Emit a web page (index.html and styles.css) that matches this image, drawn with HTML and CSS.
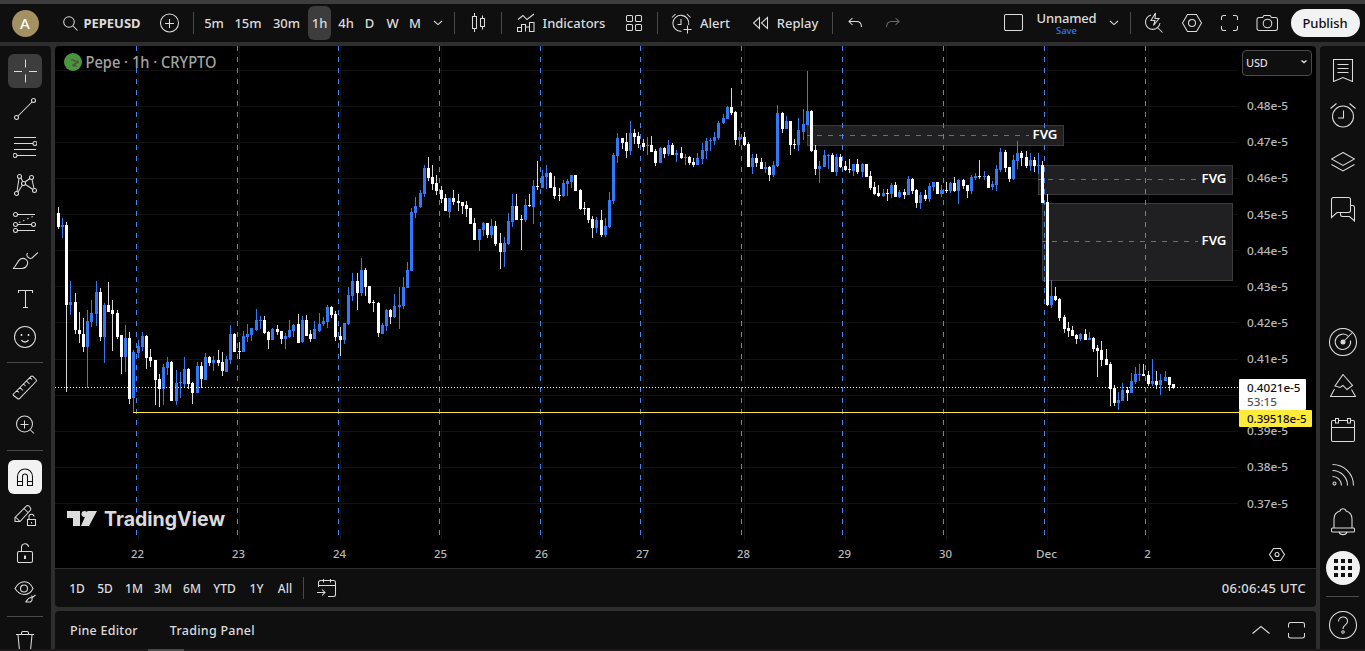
FILE: index.html
```html
<!DOCTYPE html>
<html lang="en">
<head>
    <meta charset="UTF-8">
    <meta name="viewport" content="width=device-width, initial-scale=1.0">
    <title>PEPEUSD - Chart</title>
    <link rel="stylesheet" href="styles.css">
</head>
<body>
    <div class="app">
        <header class="header">
            <div class="slot"><span class="avatar">A</span></div>
            <div class="slot symbol">
                <svg class="icon" width="15" height="15" viewBox="0 0 15 15"><circle cx="6" cy="6" r="5.3"/><path d="M10 10l4.5 4.5"/></svg>
                <b>PEPEUSD</b>
            </div>
            <div class="slot"><svg class="icon" width="20" height="20" viewBox="0 0 20 20"><circle cx="9.500" cy="10" r="9"/><path d="M5 10.500h9M9.500 6v9"/></svg></div>
            <div class="slot"><i class="sep"></i></div>
            <div class="slot">5m</div>
            <div class="slot">15m</div>
            <div class="slot">30m</div>
            <div class="slot"><span class="active-time">1h</span></div>
            <div class="slot">4h</div>
            <div class="slot">D</div>
            <div class="slot">W</div>
            <div class="slot">M</div>
            <div class="slot"><svg class="icon" width="10" height="6" viewBox="0 0 10 6"><path d="M1 1l4 3.6L9 1"/></svg></div>
            <div class="slot"><i class="sep"></i></div>
            <div class="slot"><svg class="icon" width="16" height="22" viewBox="0 0 16 22"><path d="M2.500 4.500h4v12h-4zM4.500 1v3.500M4.500 16.500V20M10.500 6.500h4v8h-4zM12.500 3.500v3M12.500 14.500v3"/></svg></div>
            <div class="slot"><i class="sep"></i></div>
            <div class="slot gap">
                <svg class="icon" width="18" height="20" viewBox="0 0 18 20"><path d="M.5 18.500v-4h4v4zM4.500 18.500v-7h4v7M8.500 18.500v-4.500h4v4.500M12.500 18.500v-9h4.500v9zM1 6.500l5-4 4 4 7-5.500"/></svg>
                <span>Indicators</span>
            </div>
            <div class="slot"><svg class="icon" width="18" height="18" viewBox="0 0 18 18"><rect x="1.500" y="1.500" width="6" height="6" rx="1"/><rect x="10.500" y="1.500" width="6" height="6" rx="1"/><rect x="1.500" y="10.500" width="6" height="6" rx="1"/><rect x="10.500" y="10.500" width="6" height="6" rx="1"/></svg></div>
            <div class="slot"><i class="sep"></i></div>
            <div class="slot gap">
                <svg class="icon" width="21" height="21" viewBox="0 0 21 21"><path d="M10.500 18.300A8 8 0 1 1 17.700 12M1 4.500L4.500 1M19.500 4.500L16 1M10 6v5.500H6.500M16.500 12.500v8M12.500 16.500h8"/></svg>
                <span>Alert</span>
            </div>
            <div class="slot"></div>
            <div class="slot gap">
                <svg class="icon" width="16" height="14" viewBox="0 0 16 14"><path d="M6.500 1.500v11L.5 7zM14.500 1.500v11L8.500 7z"/></svg>
                <span>Replay</span>
            </div>
            <div class="slot"><i class="sep"></i></div>
            <div class="slot"><svg class="icon" width="14" height="12" viewBox="0 0 14 12"><path d="M4.500 1L1 4.500 4.500 8M1 4.500h7.500c3 0 5 2 5 5.500"/></svg></div>
            <div class="slot"><svg class="icon dim" width="14" height="12" viewBox="0 0 14 12"><path d="M9.500 1L13 4.500 9.500 8M13 4.500H5.500c-3 0-5 2-5 5.500"/></svg></div>
            <div class="slot"></div>
            <div class="slot"><svg class="icon" width="20" height="18" viewBox="0 0 20 18"><rect x=".5" y=".5" width="18" height="16" rx="1.500"/></svg></div>
            <div class="slot layout-name"><span>Unnamed</span><small>Save</small></div>
            <div class="slot"><svg class="icon" width="10" height="6" viewBox="0 0 10 6"><path d="M1 1l4 3.600L9 1"/></svg></div>
            <div class="slot"><i class="sep"></i></div>
            <div class="slot"><svg class="icon" width="20" height="22" viewBox="0 0 20 22"><path d="M7 3a7.300 7.300 0 1 0 9 8M13 15l5.500 5.500M11.500 1L7 8.500h4L9.500 13.500 15 6.500h-4z"/></svg></div>
            <div class="slot"><svg class="icon" width="22" height="20" viewBox="0 0 22 20"><path d="M6.500 1.500h9L20.500 10l-5 8.500h-9L1.500 10z"/><circle cx="11" cy="10" r="3.500"/></svg></div>
            <div class="slot"><svg class="icon" width="17" height="18" viewBox="0 0 17 18"><path d="M5 1.500H2.500a2 2 0 0 0-2 2V6M12 1.500h2.500a2 2 0 0 1 2 2V6M5 16.500H2.500a2 2 0 0 1-2-2V12M12 16.500h2.500a2 2 0 0 0 2-2V12"/></svg></div>
            <div class="slot"><svg class="icon" width="22" height="18" viewBox="0 0 22 18"><path d="M3 3.500h3.500l1.500-2h6l1.500 2H19.500a2 2 0 0 1 2 2v9a2 2 0 0 1-2 2H3a2 2 0 0 1-2-2v-9a2 2 0 0 1 2-2z"/><circle cx="11.500" cy="9.500" r="4.300"/></svg></div>
            <div class="slot"><button class="publish">Publish</button></div>
        </header>

        <nav class="tools">
            <div class="slot"><span class="tool-btn"><svg class="icon" width="24" height="24" viewBox="0 0 24 24"><path d="M12.500 0.500v8M12.500 15.500v8M1 12.500h8M16 12.500h8"/></svg></span></div>
            <div class="slot"><svg class="icon" width="24" height="24" viewBox="0 0 24 24"><circle cx="3.500" cy="20.500" r="2"/><circle cx="20.500" cy="3.500" r="2"/><path d="M5 19L19 5"/></svg></div>
            <div class="slot"><svg class="icon" width="24" height="24" viewBox="0 0 24 24"><path d="M1 2.500h22M1 8.500h19M1 14.500h22M4 20.500h19"/><circle cx="22" cy="8.500" r="2"/><circle cx="2" cy="20.500" r="2"/></svg></div>
            <div class="slot"><svg class="icon" width="24" height="24" viewBox="0 0 24 24"><circle cx="6.500" cy="3.500" r="2"/><circle cx="18.500" cy="4.500" r="2"/><circle cx="3.500" cy="20.500" r="2"/><circle cx="21.500" cy="17.500" r="2"/><circle cx="10.500" cy="10.500" r="2"/><path d="M6 5.500L4 18.500M8 5l2 4M9.500 12L5 19M12 9l5-3.500M19 6.500l2 9M12.500 11.500l7.500 5"/></svg></div>
            <div class="slot"><svg class="icon" width="24" height="24" viewBox="0 0 24 24"><circle cx="2.500" cy="3.500" r="2"/><circle cx="2.500" cy="13.500" r="2"/><circle cx="20.500" cy="13.500" r="2"/><circle cx="2.500" cy="19.500" r="2"/><path d="M4.500 3.500H22M4.500 13.500h14M4.500 19.500H22"/><path d="M6 11.500L21 5" stroke-dasharray="1.500 3"/></svg></div>
            <div class="slot"><svg class="icon" width="26" height="18" viewBox="0 0 26 18"><path d="M1 16.500c3-1 4-7.500 7.500-9.500 4-2 8 1.500 7 5-.8 3-3 4.500-6 4.500zM15.500 1c-2 3 1.500 6.500 4.500 5L26 .5"/></svg></div>
            <div class="slot"><svg class="icon" width="18" height="20" viewBox="0 0 18 20"><path d="M2.500 4V1.500h14V4M9.500 1.500v17M7 18.500h5"/></svg></div>
            <div class="slot"><svg class="icon" width="24" height="24" viewBox="0 0 24 24"><circle cx="12" cy="12" r="10.500"/><path d="M8.500 15c1.500 2.700 5.500 2.700 7 0M8.500 9v2M15.500 9v2" stroke-width="1.500"/></svg></div>
            <div class="slot"><i class="line"></i></div>
            <div class="slot"><svg class="icon" width="26" height="26" viewBox="0 0 26 26"><path d="M1.500 19L19 1.500a1.500 1.500 0 0 1 2 0L24 4.500a1.500 1.500 0 0 1 0 2L7.500 23.500a1.500 1.500 0 0 1-2 0l-4-3a1 1 0 0 1 0-1.500zM5 15.500l2 2M8 12.500l3 3M11.500 9l2 2M14.500 6l3 3M18 2.500l2 2"/></svg></div>
            <div class="slot"><svg class="icon" width="20" height="20" viewBox="0 0 20 20"><circle cx="9.500" cy="9" r="8"/><path d="M5.500 9.500h8M9.500 5.500v8M15.500 15l3.500 3.500"/></svg></div>
            <div class="slot"><i class="line"></i></div>
            <div class="slot"><span class="tool-btn light"><svg class="icon" width="18" height="20" viewBox="0 0 18 20"><path d="M1.500 18.500v-9a7.500 7.500 0 0 1 15 0v9h-5v-9a2.500 2.500 0 0 0-5 0v9zM1.500 14.500h5M11.500 14.500h5"/></svg></span></div>
            <div class="slot"><svg class="icon" width="24" height="24" viewBox="0 0 24 24"><path d="M2 17.500v-4L13.500 2a2 2 0 0 1 2.500 0L17.500 4a2 2 0 0 1 0 2L7 17.500zM11 4.500l4 4M2.500 13l4.500 4.500M14.500 15.500h8v6h-8zM16 15.500V13a2.500 2.500 0 0 1 5-.5M18.500 18v1.500"/></svg></div>
            <div class="slot"><svg class="icon" width="18" height="22" viewBox="0 0 18 22"><rect x="1.500" y="8.500" width="15" height="11" rx="1.500"/><path d="M5.500 8.500V4.500a3.500 3.500 0 0 1 7-.5"/><path d="M9 12.500v3.500" stroke-width="2"/></svg></div>
            <div class="slot"><svg class="icon" width="24" height="24" viewBox="0 0 24 24"><path d="M2 8.500c5-9 14-9 18 0-4 8-13 8-18 0z"/><circle cx="11" cy="8.500" r="3.500"/><path d="M12.500 22c2-1 1.500-4 5-4.500 2 0 2.500 2.500 0 4.500zM18.500 15.500l1 2 3-2.500"/></svg></div>
            <div class="slot"><i class="line"></i></div>
            <div class="slot"><svg class="icon" width="20" height="24" viewBox="0 0 20 24"><path d="M1 5.500h18M6.500 5V4a1.500 1.500 0 0 1 1.500-1.500h4A1.500 1.500 0 0 1 13.500 4V5M3 6l1.500 15.500h11L17 6"/></svg></div>
        </nav>

        <main class="center">
            <section class="chart">
                <svg id="chart" width="1261" height="522" viewBox="55 46 1261 522"></svg>
                <button class="currency">USD <svg class="icon" width="6" height="4" viewBox="0 0 6 4"><path d="M.5.5L3 2.500 5.500.5" stroke-width="1.400"/></svg></button>
            </section>
            <div class="ranges">
                <div class="slot">1D</div>
                <div class="slot">5D</div>
                <div class="slot">1M</div>
                <div class="slot">3M</div>
                <div class="slot">6M</div>
                <div class="slot">YTD</div>
                <div class="slot">1Y</div>
                <div class="slot">All</div>
                <div class="slot"><i class="sep"></i></div>
                <div class="slot"><svg class="icon" width="20" height="20" viewBox="0 0 20 20"><path d="M1.500 9V4.500a2 2 0 0 1 2-2h13a2 2 0 0 1 2 2v12a2 2 0 0 1-2 2H11M1.500 7.500h17M6.500 1v3.500M13.500 1v3.500M0 14.500h8M5 11.500l3 3-3 3"/></svg></div>
                <div class="clock">06:06:45 UTC</div>
            </div>
            <footer class="bottom">
                <span class="pine">Pine Editor</span>
                <span class="panel">Trading Panel</span>
                <span class="bottom-icons">
                    <svg class="icon" width="18" height="10" viewBox="0 0 18 10"><path d="M.5 8.500L9 1.500l8.500 7"/></svg>
                    <svg class="icon" width="17" height="17" viewBox="0 0 17 17"><path d="M.5 5.500v-3a2 2 0 0 1 2-2h12a2 2 0 0 1 2 2v3M.5 11v3a2 2 0 0 0 2 2h12a2 2 0 0 0 2-2v-3"/></svg>
                </span>
            </footer>
        </main>

        <aside class="side">
            <div class="slot"><svg class="icon" width="22" height="24" viewBox="0 0 22 24"><path d="M1.500 1.500h19v22L11 19.500 1.500 23.500zM5.500 6.500h11M5.500 10.500h11M5.500 14.500h11"/></svg></div>
            <div class="slot"><svg class="icon" width="26" height="26" viewBox="0 0 26 26"><circle cx="13" cy="13.500" r="10.500"/><path d="M13.500 7.500V15H8M.5 5.500L6.500.5M25.500 5.500L19.500.5"/></svg></div>
            <div class="slot"><svg class="icon" width="24" height="20" viewBox="0 0 24 20"><path d="M12 .5L23.500 7 12 13.500.5 7zM.5 12.500L12 19l11.500-6.500"/></svg></div>
            <div class="slot"><svg class="icon" width="26" height="26" viewBox="0 0 26 26"><path d="M3.500 1.500h15a2 2 0 0 1 2 2v11a2 2 0 0 1-2 2H7l-5.500 5v-18a2 2 0 0 1 2-2zM20.500 9.500H23a2 2 0 0 1 1.500 2V25L19.500 20.500h-7a2 2 0 0 1-2-2v-2"/></svg></div>
            <div class="slot"></div>
            <div class="slot"><svg class="icon" width="28" height="28" viewBox="0 0 28 28"><circle cx="14" cy="14" r="13.500"/><path d="M19.500 8.500a7.700 7.700 0 1 0 2 4M14 14l9.500-9.500"/><circle class="dot" cx="14" cy="14" r="2"/></svg></div>
            <div class="slot"><svg class="icon" width="26" height="24" viewBox="0 0 26 24"><path d="M13 .5l9.500 11-5.500 4-4-4-3 2-5-1.500zM4.500 15l-4 7.500h25l-4-7"/></svg></div>
            <div class="slot"><svg class="icon" width="26" height="26" viewBox="0 0 26 26"><path d="M5.500 3.500H3a1.500 1.500 0 0 0-1.500 1.500v18a1.500 1.500 0 0 0 1.500 1.500h20a1.500 1.500 0 0 0 1.500-1.500V5a1.500 1.500 0 0 0-1.500-1.500h-2.500M8.500 3.500h9M1.500 10.500h23M5.500 1.500h3v4.500h-3zM17.500 1.500h3v4.500h-3z"/></svg></div>
            <div class="slot"><svg class="icon" width="24" height="24" viewBox="0 0 24 24"><circle cx="3.500" cy="20.500" r="1.500"/><path d="M1.500 1.500a21 21 0 0 1 21 21M1.500 7.500a15 15 0 0 1 15 15M1.500 13.500a9 9 0 0 1 9 9"/></svg></div>
            <div class="slot"><svg class="icon" width="26" height="28" viewBox="0 0 26 28"><path d="M4 20v-9c0-4 2.500-7 6-8 .5-3 5.500-3 6 0 3.500 1 6 4 6 8v9M2.500 20h21a1 1 0 0 1 1 1v2a1 1 0 0 1-1 1h-21a1 1 0 0 1-1-1v-2a1 1 0 0 1 1-1zM9 24c1 3.500 7 3.500 8 0"/></svg></div>
            <div class="slot"><svg class="apps" width="34" height="34" viewBox="0 0 34 34"><circle class="disc" cx="17" cy="17" r="17"/><path d="M8 8h4v4H8zM15 8h4v4h-4zM22 8h4v4h-4zM8 15h4v4H8zM15 15h4v4h-4zM22 15h4v4h-4zM8 22h4v4H8zM15 22h4v4h-4zM22 22h4v4h-4z"/></svg></div>
            <div class="slot"><i class="line"></i></div>
            <div class="slot"><svg class="icon" width="28" height="28" viewBox="0 0 28 28"><circle cx="14" cy="14" r="13.500"/><path d="M9.500 10.500c0-6 9-6 9 0 0 3.500-4.500 3.500-4.500 7.500"/><circle cx="14" cy="21" r="1.300"/></svg></div>
        </aside>
    </div>
    <div class="strip"><i class="handle"></i></div>
    <script src="chart.js"></script>
</body>
</html>
```
FILE: styles.css
```css
* {
    box-sizing: border-box;
}
body {
    margin: 0;
    width: 1365px;
    height: 651px;
    overflow: hidden;
    background: #2e2e2e;
    color: #dbdbdb;
    font-family: "Noto Sans", "Open Sans", sans-serif;
    font-size: 13px;
    font-weight: 500;
}
.app {
    display: grid;
    grid-template-columns: 51px 1261px 45px;
    grid-template-rows: 38px 603px;
    gap: 4px;
    height: 649px;
    border-top: 4px solid #3d3d3d;
}
.slot {
    display: flex;
    align-items: center;
    justify-content: center;
    white-space: nowrap;
}
.icon {
    display: block;
    flex: none;
    fill: none;
    stroke: #dbdbdb;
    stroke-width: 1.05;
}
.icon .dot {
    fill: #dbdbdb;
}
.dim {
    stroke: #6a6a6a;
}
.sep {
    width: 1px;
    height: 22px;
    background: #4a4a4a;
}
.line {
    width: 36px;
    height: 1px;
    background: #4a4a4a;
}

/* top bar */
.header {
    grid-column: 1 / 4;
    display: grid;
    grid-template-columns: 50px 104px 31px 16px 26px 42px 35px 31px 22px 25px 21px 24px 22px 10px 38px 8px 112px 34px 12px 75px 3px 89px 5px 40px 36px 83px 39px 67px 27px 7px 39px 37px 39px 36px 80px;
    background: #0f0f0f;
}
.avatar {
    width: 27px;
    height: 27px;
    border-radius: 50%;
    background: #a39161;
    color: #fff;
    font-size: 15px;
    line-height: 27px;
    text-align: center;
}
.symbol {
    gap: 5px;
    font-size: 13px;
}
.symbol b {
    font-weight: 700;
}
.gap {
    gap: 8px;
}
.active-time {
    width: 23px;
    height: 34px;
    border-radius: 6px;
    background: #3d3d3d;
    line-height: 34px;
    text-align: center;
}
.layout-name {
    flex-direction: column;
    padding-top: 2px;
    line-height: 13px;
    letter-spacing: -0.2px;
}
.layout-name small {
    font-size: 9.5px;
    line-height: 11px;
    letter-spacing: 0;
    color: #2f7bff;
}
.publish {
    width: 69px;
    height: 28px;
    padding: 0;
    border: none;
    border-radius: 14px;
    background: #f2f2f2;
    color: #0f0f0f;
    font: inherit;
    letter-spacing: -0.1px;
}

/* drawing tools */
.tools {
    display: grid;
    grid-template-rows: repeat(8, 38px) 13px 38px 36px 15px 38px 39px 38px 38px 11px 38px;
    padding-top: 6px;
    overflow: hidden;
    background: #0f0f0f;
    border-top-right-radius: 4px;
}
.tools .slot {
    padding-right: 1px;
}
.tool-btn {
    display: flex;
    align-items: center;
    justify-content: center;
    width: 34px;
    height: 34px;
    border-radius: 6px;
    background: #3d3d3d;
}
.light {
    background: #f2f2f2;
}
.light .icon {
    stroke: #0f0f0f;
}

/* chart column */
.center {
    display: grid;
    grid-template-rows: 522px 39px 38px;
    overflow: hidden;
}
.chart {
    position: relative;
    background: #000;
    border-radius: 4px 4px 0 0;
    overflow: hidden;
}
.chart svg {
    display: block;
}
.chart text {
    fill: #b8b8b8;
    font-size: 11.5px;
    font-weight: 500;
}
.chart .legend {
    fill: #a3a3a3;
    font-size: 15.5px;
}
.chart .fvg {
    fill: #fff;
    font-size: 13px;
    font-weight: 600;
}
.chart .dark {
    fill: #0f0f0f;
}
.chart .countdown {
    fill: #555;
}
.chart .brand {
    fill: #dbdbdb;
    stroke: #000;
    stroke-width: 4px;
    paint-order: stroke;
    font-family: Inter, sans-serif;
    font-size: 20px;
    font-weight: 700;
}
.currency {
    position: absolute;
    top: 4px;
    right: 4px;
    display: flex;
    align-items: center;
    justify-content: space-between;
    width: 70px;
    height: 26px;
    padding: 0 4px 2px 3px;
    border: 1px solid #4a4a4a;
    border-radius: 4px;
    background: #0f0f0f;
    color: #dbdbdb;
    font: 500 11px "Noto Sans", sans-serif;
    letter-spacing: -0.2px;
}
.ranges {
    display: grid;
    grid-template-columns: 28px 28px 30px 28px 30px 35px 29px 28px 9px 37px 1fr;
    padding-left: 8px;
    border-top: 1px solid #2e2e2e;
    border-radius: 0 0 4px 4px;
    background: #0f0f0f;
    font-size: 12px;
}
.clock {
    align-self: center;
    padding-right: 10px;
    text-align: right;
    font-size: 13px;
    letter-spacing: 0.35px;
}
.bottom {
    display: flex;
    align-items: center;
    margin-top: 4px;
    height: 38px;
    padding: 0 11px 0 15px;
    border-radius: 4px 4px 0 0;
    background: #0f0f0f;
    font-size: 12.5px;
    letter-spacing: 0.25px;
}
.panel {
    margin-left: 32px;
}
.bottom-icons {
    display: flex;
    align-items: center;
    gap: 18px;
    margin-left: auto;
}

/* right sidebar */
.side {
    display: grid;
    grid-template-rows: 48px 44px 47px 48px 87px 44px 44px 44px 46px 47px 46px 11px 46px;
    background: #0f0f0f;
    border-top-left-radius: 4px;
}
.side .line {
    width: 33px;
}
.apps {
    fill: #0f0f0f;
}
.apps .disc {
    fill: #f2f2f2;
}
.strip {
    height: 2px;
    padding-left: 148px;
    background: #1c1a1b;
}
.handle {
    display: block;
    width: 36px;
    height: 2px;
    background: #4a4a4a;
}
```
FILE: chart.js
```js
// hourly candles: [high, body top, body bottom, low, up]
const candles = [
    [207,213,227,229,0],[218,225,227,238,1],[222,225,305,392,0],[281,302,305,315,1],[293,302,330,334,0],[312,330,334,343,0],
    [318,334,347,352,0],[310,321,347,388,1],[300,313,322,327,1],[281,292,314,326,1],[288,292,337,341,0],[303,305,337,363,1],
    [282,305,312,312,0],[300,310,314,351,0],[310,313,337,339,0],[335,335,357,374,0],[325,338,357,372,1],[332,338,399,404,0],
    [350,352,398,412,1],[340,346,353,358,1],[332,336,347,351,1],[335,336,358,369,0],[349,357,361,367,0],[360,360,380,405,0],
    [374,379,389,407,0],[364,367,389,405,1],[357,362,368,375,1],[361,362,401,401,0],[370,383,401,405,1],[372,382,383,398,1],
    [357,369,384,387,1],[368,369,384,389,0],[382,383,393,404,0],[362,366,393,393,1],[362,366,379,388,0],[353,357,380,380,1],
    [356,357,363,366,0],[356,360,363,371,1],[350,360,363,366,0],[352,362,371,376,0],[356,359,372,372,1],[325,334,360,364,1],
    [333,334,352,352,0],[342,351,352,359,0],[331,336,352,352,1],[324,334,337,342,1],[328,328,335,341,1],[309,320,330,331,1],
    [316,320,321,329,1],[316,320,333,334,0],[331,332,340,349,0],[328,329,340,340,1],[325,329,332,335,0],[331,331,339,344,0],
    [333,336,339,349,1],[320,330,337,338,1],[324,325,331,337,1],[314,324,343,343,0],[316,320,342,343,1],[315,320,336,336,0],
    [330,334,339,342,0],[321,329,339,339,1],[313,324,331,332,1],[317,321,324,326,1],[305,307,322,328,1],[306,307,315,318,0],
    [311,314,337,341,0],[327,336,340,356,0],[323,323,340,344,1],[287,295,324,325,1],[273,281,296,301,1],[273,281,293,310,0],
    [258,270,293,296,1],[268,270,287,296,0],[286,286,303,304,0],[300,302,303,312,0],[302,303,333,337,0],[323,325,334,334,1],
    [309,310,326,331,1],[309,310,317,324,0],[294,306,317,318,1],[287,305,307,329,1],[277,287,306,309,1],[262,270,288,288,1],
    [208,212,271,271,1],[197,206,213,218,1],[190,193,207,208,1],[165,168,194,197,1],[157,168,178,181,0],[165,177,184,190,0],
    [175,183,191,195,0],[186,190,199,203,0],[194,198,211,211,0],[198,198,212,218,1],[190,198,202,205,0],[194,201,203,211,0],
    [202,202,206,214,0],[201,205,209,217,0],[208,208,224,224,0],[218,223,240,240,0],[229,229,240,251,1],[222,223,230,236,1],
    [223,223,235,238,0],[219,226,235,238,1],[221,226,244,246,0],[233,243,252,269,0],[237,243,252,267,1],[213,221,244,245,1],
    [194,206,222,227,1],[194,206,220,220,0],[215,219,220,250,0],[199,205,220,222,1],[194,205,206,207,0],[180,186,207,224,1],
    [161,186,187,190,0],[170,176,188,188,1],[165,173,177,189,1],[172,173,188,188,0],[176,187,196,199,0],[188,195,196,201,0],
    [180,183,196,197,1],[179,181,184,196,1],[175,175,182,188,1],[175,175,191,191,0],[189,190,209,210,0],[202,208,209,215,0],
    [208,208,220,223,0],[216,219,228,238,0],[217,220,228,233,1],[210,220,235,237,0],[218,226,235,237,1],[192,200,227,228,1],
    [153,155,201,204,1],[133,138,156,163,1],[138,138,143,149,0],[133,142,151,158,0],[121,133,151,155,1],[129,133,137,144,0],
    [132,136,144,148,0],[139,143,147,151,0],[137,145,146,155,1],[136,145,152,152,0],[149,151,163,166,0],[147,148,163,163,1],
    [147,148,154,158,0],[140,145,154,156,1],[143,145,155,155,0],[150,153,155,162,1],[147,153,158,159,0],[154,157,158,165,1],
    [156,157,163,165,0],[158,162,165,167,0],[153,158,165,165,1],[143,150,159,164,1],[138,141,151,159,1],[138,140,141,151,1],
    [132,137,141,145,1],[121,123,138,140,1],[114,118,123,124,1],[106,107,119,119,1],[88,107,113,115,0],[111,112,140,145,0],
    [131,137,140,146,1],[132,137,145,146,0],[142,144,167,167,0],[154,158,167,174,1],[154,158,163,167,0],[158,162,169,169,0],
    [162,167,169,173,1],[166,167,175,181,0],[161,165,175,177,1],[105,113,166,167,1],[112,113,129,133,0],[116,121,129,129,1],
    [121,121,145,155,0],[139,144,145,149,0],[118,130,145,151,1],[109,124,132,140,1],[71,111,125,125,1],[110,111,151,152,0],
    [145,150,169,175,0],[161,166,169,183,1],[150,155,167,167,1],[154,155,156,169,1],[153,155,172,172,0],[154,157,172,176,1],
    [154,157,167,168,0],[161,166,170,171,0],[159,169,170,173,0],[164,164,171,176,1],[159,164,172,174,0],[163,164,172,177,1],
    [164,164,177,177,0],[171,176,188,190,0],[182,187,194,195,0],[185,193,196,197,0],[189,193,196,197,1],[189,193,194,201,0],
    [183,185,194,198,1],[182,185,197,197,0],[190,192,197,198,1],[189,192,195,199,0],[176,179,195,195,1],[178,179,191,194,0],
    [189,190,203,208,0],[192,195,203,209,1],[190,195,199,201,0],[183,186,199,202,1],[182,182,187,191,1],[182,182,194,194,0],
    [185,190,194,197,1],[182,190,191,193,0],[182,183,191,193,1],[177,183,191,192,0],[179,180,191,204,1],[179,180,186,189,0],
    [185,185,191,198,0],[175,177,191,194,1],[173,176,178,180,1],[160,176,177,179,0],[171,176,177,180,1],[175,176,188,188,0],
    [181,184,187,190,1],[165,169,185,191,1],[148,152,170,172,1],[150,152,168,172,0],[167,167,179,182,0],[155,160,179,180,1],
    [141,153,161,169,1],[151,153,158,166,0],[151,157,166,168,0],[153,160,166,171,1],[157,160,166,172,0],[153,165,166,174,1],
    [161,165,203,203,0],[194,202,305,306,0],[280,296,305,308,1],[287,296,300,301,0],[298,299,318,321,0],[315,317,329,333,0],
    [322,328,331,337,0],[326,330,336,336,0],[334,335,339,344,0],[333,334,339,341,1],[329,334,340,340,0],[332,338,340,340,1],
    [337,338,349,352,0],[345,348,351,377,0],[341,350,360,366,0],[349,359,365,365,0],[362,364,389,406,0],[385,388,403,406,0],
    [392,400,403,410,1],[383,390,401,401,1],[387,390,393,401,0],[373,381,393,393,1],[367,374,382,384,1],[364,374,375,381,1],
    [364,374,376,376,0],[371,375,384,386,0],[359,381,384,386,1],[371,381,385,389,0],[374,380,385,395,1],[371,377,381,381,1],
    [377,377,385,391,0],[384,384,388,389,0]
];

const gridX = [138, 239, 340, 441, 542, 643, 744, 845, 946, 1047, 1148];
const gridY = [70, 106, 142, 178, 214, 250, 286, 322, 359, 395, 431, 467, 503];
const labelY = [110, 146, 182, 219, 255, 291, 327, 363, 0, 435, 471, 508];
const days = ['22', '23', '24', '25', '26', '27', '28', '29', '30', 'Dec', '2'];
const dayBreaks = [136, 237, 338, 439, 540, 640, 741, 842, 943, 1044, 1145];
// fair value gaps: left, top, right, bottom, middle
const gaps = [
    [807, 125, 1064, 146, 135],
    [1038, 165, 1233, 195, 179],
    [1042, 203, 1233, 281, 241]
];

function rect(x, y, w, h, fill, extra = '') {
    return `<rect x="${x}" y="${y}" width="${w}" height="${h}" fill="${fill}" ${extra}/>`;
}

function line(x1, y1, x2, y2, color, dash = '', offset = 0) {
    return `<line x1="${x1}" y1="${y1}" x2="${x2}" y2="${y2}" stroke="${color}" stroke-dasharray="${dash}" stroke-dashoffset="${offset}"/>`;
}

function text(x, y, width, str, cls = '') {
    return `<text x="${x}" y="${y}" textLength="${width}" lengthAdjust="spacingAndGlyphs" class="${cls}">${str}</text>`;
}

let out = '';

gridX.forEach(x => out += rect(x, 46, 1, 494, '#121212'));
gridY.forEach(y => out += rect(55, y, 1183, 1, '#121212'));

gaps.forEach(([l, t, r, b, m]) => {
    out += rect(l + 0.5, t + 0.5, r - l - 1, b - t - 1, '#202022', 'stroke="#3b3b3e"');
    out += line(l, m + 0.5, r - 35, m + 0.5, '#f23645', '5 6', 1);
});

dayBreaks.forEach(x => out += line(x + 0.5, 46, x + 0.5, 540, '#4a86f0', '5 6'));

candles.forEach(([high, top, bottom, low, up], i) => {
    const x = Math.floor(58.23 + i * 101 / 24);
    out += rect(x, high, 1, low - high, up ? '#3179f5' : '#d6d6d6');
    out += rect(x - 1, top, 3, bottom - top, up ? '#3179f5' : '#ffffff');
});

gaps.forEach(([l, t, r, b, m]) => out += text(r - 31.5, m + 4, 25, 'FVG', 'fvg'));

out += line(55, 387.5, 1239, 387.5, '#ffffff', '1 2');
out += rect(133, 412, 1106, 1, '#ffeb3b');

// price scale
labelY.forEach((y, i) => {
    if (y) out += text(1247, y, 41, `0.${48 - i}e-5`);
});
out += rect(1239, 379, 67, 31, '#ffffff', 'rx="1"');
out += text(1247, 392, 53.5, '0.4021e-5', 'dark');
out += text(1247, 406, 30, '53:15', 'countdown');
out += rect(1239, 410, 73, 17, '#ffeb3b', 'rx="1"');
out += text(1247, 423, 59.5, '0.39518e-5', 'dark');

// time scale
days.forEach((d, i) => {
    const w = d === 'Dec' ? 21 : d.length * 6.5;
    out += text(gridX[i] - 0.5 - w / 2, 558, w, d);
});
out += '<g fill="none" stroke="#dbdbdb" stroke-width="1.1"><path d="M1273.500 548.500h7l4 6-4 6h-7l-4-6z"/><circle cx="1277" cy="554.500" r="2"/></g>';

// legend
out += '<circle cx="73" cy="62" r="9" fill="#4c9540"/><path d="M71 60h3v1h4v2h-3v2h-3M73 66h4" fill="none" stroke="#5b3b33"/>';
out += text(85.500, 68, 131, 'Pepe · 1h · CRYPTO', 'legend');

// watermark
out += '<path d="M67 511h13v15h-7v-8h-6zM89 526h-8l6.500-15h9.500z" fill="#dbdbdb" stroke="#000" stroke-width="4" paint-order="stroke"/><circle cx="84.500" cy="514" r="3" fill="#dbdbdb"/>';
out += text(104, 526, 121, 'TradingView', 'brand');

document.getElementById('chart').innerHTML = out;
```
